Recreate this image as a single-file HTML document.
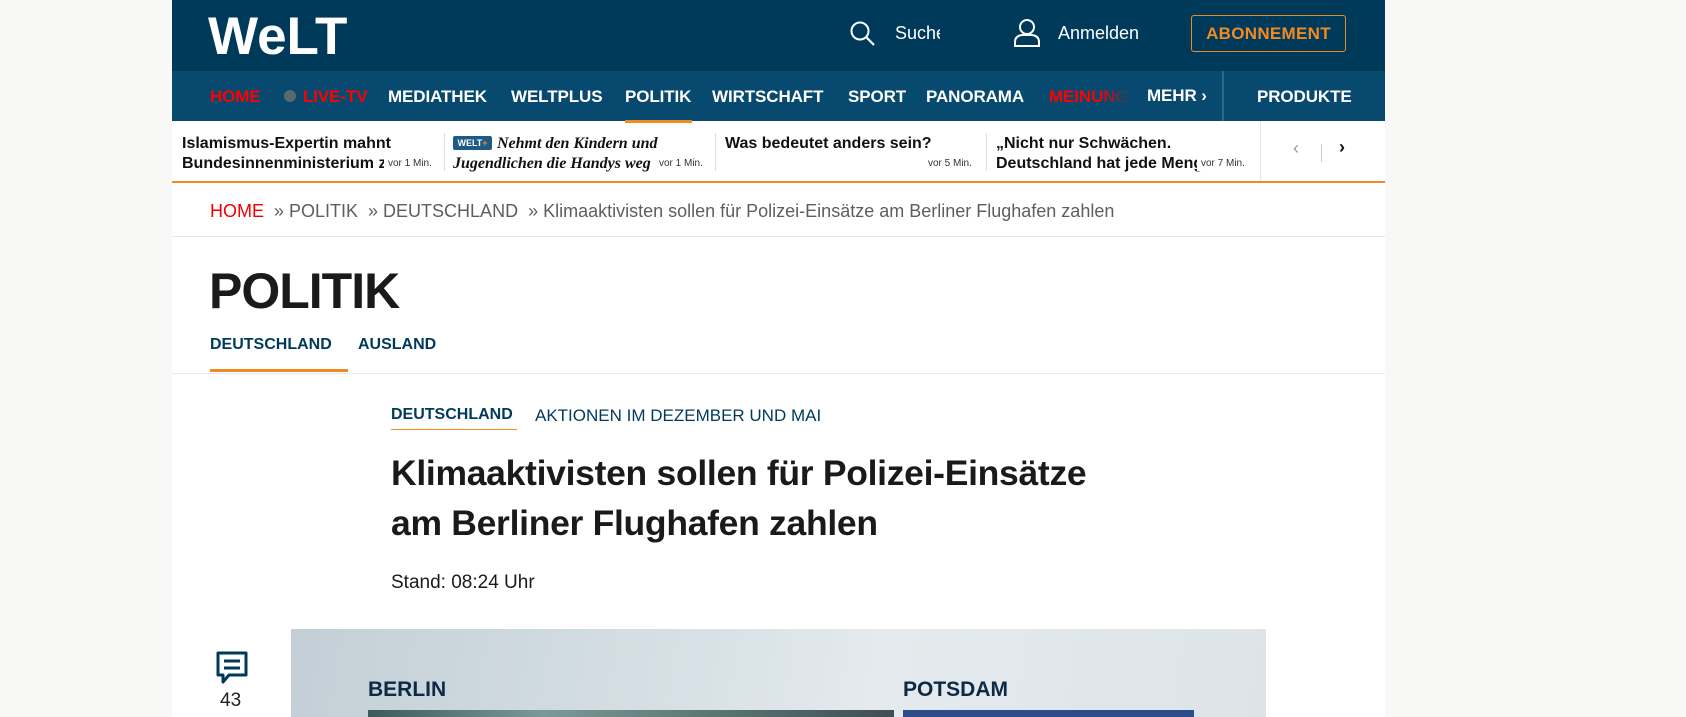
<!DOCTYPE html>
<html><head><meta charset="utf-8"><style>
*{margin:0;padding:0;box-sizing:border-box}
body{width:1686px;height:717px;overflow:hidden;background:#f8f8f6;font-family:"Liberation Sans",Arial,sans-serif;position:relative}
.col{position:absolute;left:172px;top:0;width:1213px;height:717px;background:#fff}
.abs{position:absolute;white-space:nowrap}
.hdr{position:absolute;left:172px;top:0;width:1213px;height:71px;background:#003a5a}
.nav{position:absolute;left:172px;top:71px;width:1213px;height:50px;background:#07496f}
.nv{position:absolute;top:87px;font-weight:bold;font-size:17px;color:#fff;white-space:nowrap;letter-spacing:-0.1px}
.tk{position:absolute;top:134px;font-weight:bold;font-size:16px;color:#111;line-height:20px;height:38px;overflow:hidden;white-space:nowrap}
.tm{position:absolute;top:157px;font-size:10px;color:#333;white-space:nowrap;background:#fff;padding-left:4px;line-height:14px}
.sep{position:absolute;top:133px;width:1px;height:38px;background:#ddd}
</style></head><body>
<div class="col"></div>
<div class="hdr"></div>
<div class="abs" style="left:208px;top:6px;font-size:53px;font-weight:bold;color:#fff;letter-spacing:0px">WeLT</div>
<svg class="abs" style="left:849px;top:20px" width="28" height="28" viewBox="0 0 28 28"><circle cx="11" cy="11" r="8.5" fill="none" stroke="#fff" stroke-width="2"/><line x1="17" y1="17" x2="25" y2="25" stroke="#fff" stroke-width="2.2"/></svg>
<div class="abs" style="left:895px;top:23px;font-size:18px;color:#fff;width:45px;overflow:hidden">Suche</div>
<svg class="abs" style="left:1013px;top:18px" width="28" height="30" viewBox="0 0 28 30"><circle cx="14" cy="9" r="7" fill="none" stroke="#fff" stroke-width="2"/><path d="M2 28 V24 Q2 18 9 17 H19 Q26 18 26 24 V28 Z" fill="none" stroke="#fff" stroke-width="2"/></svg>
<div class="abs" style="left:1058px;top:23px;font-size:18px;color:#fff">Anmelden</div>
<div class="abs" style="left:1191px;top:15px;width:155px;height:37px;border:1px solid #f08a24;border-radius:3px;color:#f08a24;font-weight:bold;font-size:17px;text-align:center;line-height:35px;letter-spacing:0.3px">ABONNEMENT</div>
<div class="nav"></div>
<div class="nv" style="left:210px;color:#f00">HOME</div>
<div class="abs" style="left:284px;top:90px;width:12px;height:12px;border-radius:50%;background:#5a6a6a"></div>
<div class="nv" style="left:303px;color:#f00">LIVE-TV</div>
<div class="nv" style="left:388px">MEDIATHEK</div>
<div class="nv" style="left:511px">WELTPLUS</div>
<div class="nv" style="left:625px">POLITIK</div>
<div class="abs" style="left:625px;top:120px;width:67px;height:3px;background:#f08a24"></div>
<div class="nv" style="left:712px">WIRTSCHAFT</div>
<div class="nv" style="left:848px">SPORT</div>
<div class="nv" style="left:926px">PANORAMA</div>
<div class="nv" style="left:1049px;color:#f00;width:82px;overflow:hidden;-webkit-mask-image:linear-gradient(90deg,#000 60%,transparent)">MEINUNG</div>
<div class="nv" style="left:1147px;top:86px">MEHR ›</div>
<div class="abs" style="left:1222px;top:71px;width:2px;height:50px;background:#2f6688"></div>
<div class="nv" style="left:1257px">PRODUKTE</div>
<div class="tk" style="left:182px;width:252px">Islamismus-Expertin mahnt<br>Bundesinnenministerium zur</div>
<div class="tm" style="left:384px">vor 1 Min.</div>
<div class="sep" style="left:444px"></div>
<div class="abs" style="left:453px;top:136px;width:39px;height:14px;background:#1d5b86;border-radius:2px;color:#fff;font-size:9px;font-weight:bold;line-height:14px;text-align:center">WELT<span style="color:#f08a24">+</span></div>
<div class="tk" style="left:453px;width:255px;font-family:'Liberation Serif',serif;font-style:italic;font-size:16px"><span style="padding-left:44px">Nehmt den Kindern und</span><br>Jugendlichen die Handys weg</div>
<div class="tm" style="left:655px">vor 1 Min.</div>
<div class="sep" style="left:715px"></div>
<div class="tk" style="left:725px;width:255px">Was bedeutet anders sein?</div>
<div class="tm" style="left:924px">vor 5 Min.</div>
<div class="sep" style="left:986px"></div>
<div class="tk" style="left:996px;width:255px">„Nicht nur Schwächen.<br>Deutschland hat jede Menge</div>
<div class="tm" style="left:1197px">vor 7 Min.</div>
<div class="sep" style="left:1260px;top:121px;height:61px;background:#e6e6e6"></div>
<div class="abs" style="left:1293px;top:138px;font-size:18px;color:#999">‹</div>
<div class="abs" style="left:1321px;top:144px;width:1px;height:18px;background:#ccc"></div>
<div class="abs" style="left:1339px;top:137px;font-size:18px;color:#111;font-weight:bold">›</div>
<div class="abs" style="left:172px;top:181px;width:1213px;height:2px;background:#f08a24"></div>
<div class="abs" style="left:210px;top:201px;font-size:18px;color:#5e5e5e"><span style="color:#e00">HOME</span> &nbsp;» POLITIK &nbsp;» DEUTSCHLAND &nbsp;» Klimaaktivisten sollen für Polizei-Einsätze am Berliner Flughafen zahlen</div>
<div class="abs" style="left:172px;top:236px;width:1213px;height:1px;background:#e8e8e8"></div>
<div class="abs" style="left:209px;top:262px;font-size:50px;font-weight:bold;color:#1a1a1a;letter-spacing:-1px">POLITIK</div>
<div class="abs" style="left:210px;top:336px;font-size:16px;font-weight:bold;color:#003a5a">DEUTSCHLAND</div>
<div class="abs" style="left:358px;top:336px;font-size:16px;font-weight:bold;color:#003a5a">AUSLAND</div>
<div class="abs" style="left:210px;top:369px;width:138px;height:3px;background:#f08a24"></div>
<div class="abs" style="left:172px;top:373px;width:1213px;height:1px;background:#e8e8e8"></div>
<div class="abs" style="left:391px;top:406px;font-size:16px;font-weight:bold;color:#003a5a">DEUTSCHLAND</div>
<div class="abs" style="left:391px;top:429px;width:126px;height:1px;background:#f08a24"></div>
<div class="abs" style="left:535px;top:406px;font-size:17px;color:#003a5a">AKTIONEN IM DEZEMBER UND MAI</div>
<div class="abs" style="left:391px;top:448px;font-size:35.5px;font-weight:bold;color:#1a1a1a;line-height:50px;letter-spacing:-0.3px">Klimaaktivisten sollen für Polizei-Einsätze<br>am Berliner Flughafen zahlen</div>
<div class="abs" style="left:391px;top:572px;font-size:19px;color:#1a1a1a">Stand: 08:24 Uhr</div>
<svg class="abs" style="left:215px;top:650px" width="34" height="36" viewBox="0 0 34 36"><path d="M3 3 H31 V25 H14 L8 32 V25 H3 Z" fill="none" stroke="#003a5a" stroke-width="3" stroke-linejoin="round"/><line x1="9" y1="11" x2="25" y2="11" stroke="#003a5a" stroke-width="3"/><line x1="9" y1="18" x2="25" y2="18" stroke="#003a5a" stroke-width="3"/></svg>
<div class="abs" style="left:220px;top:690px;font-size:19px;color:#222">43</div>
<div class="abs" style="left:291px;top:629px;width:975px;height:88px;background:linear-gradient(100deg,#c3cfd6 0%,#d6e0e5 40%,#e4eaed 60%,#dde4e8 100%)"></div>
<div class="abs" style="left:368px;top:678px;font-size:21px;font-weight:bold;color:#0d2a45">BERLIN</div>
<div class="abs" style="left:903px;top:678px;font-size:21px;font-weight:bold;color:#0d2a45">POTSDAM</div>
<div class="abs" style="left:368px;top:710px;width:526px;height:7px;background:linear-gradient(90deg,#3d5a5a,#7d9898,#5b7373,#3d4f55)"></div>
<div class="abs" style="left:903px;top:710px;width:291px;height:7px;background:#2d4c8a"></div>
</body></html>
